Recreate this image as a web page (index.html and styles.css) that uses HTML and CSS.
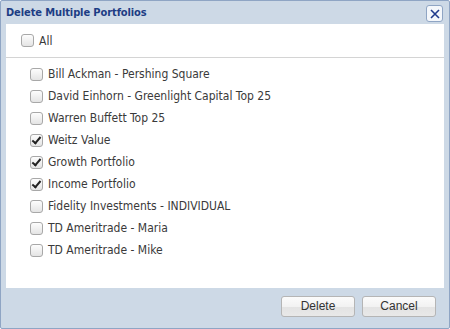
FILE: index.html
```html
<!DOCTYPE html>
<html>
<head>
<meta charset="utf-8">
<link rel="stylesheet" href="styles.css">
</head>
<body>
<div class="dialog">
  <div class="titlebar">
    <span class="title">Delete Multiple Portfolios</span>
    <button class="close" aria-label="Close">
      <svg width="10" height="10" viewBox="0 0 10 10"><path d="M1 1L9 9M9 1L1 9" stroke="#1f3a8c" stroke-width="1.6" fill="none"/></svg>
    </button>
  </div>
  <div class="content">
    <div class="allrow">
      <label class="item"><span class="cb"></span><span>All</span></label>
    </div>
    <ul class="list">
      <li class="item"><span class="cb"></span><span>Bill Ackman - Pershing Square</span></li>
      <li class="item"><span class="cb"></span><span>David Einhorn - Greenlight Capital Top 25</span></li>
      <li class="item"><span class="cb"></span><span>Warren Buffett Top 25</span></li>
      <li class="item"><span class="cb on"></span><span>Weitz Value</span></li>
      <li class="item"><span class="cb on"></span><span>Growth Portfolio</span></li>
      <li class="item"><span class="cb on"></span><span>Income Portfolio</span></li>
      <li class="item"><span class="cb"></span><span>Fidelity Investments - INDIVIDUAL</span></li>
      <li class="item"><span class="cb"></span><span>TD Ameritrade - Maria</span></li>
      <li class="item"><span class="cb"></span><span>TD Ameritrade - Mike</span></li>
    </ul>
  </div>
  <div class="footer">
    <button class="btn">Delete</button>
    <button class="btn">Cancel</button>
  </div>
</div>
</body>
</html>
```
FILE: styles.css
```css
html, body { margin: 0; padding: 0; background: #fff; }
body { font-family: "DejaVu Sans", Verdana, sans-serif; font-size: 11px; color: #333; }
.dialog {
  width: 448px; height: 327px;
  border: 1px solid #8fa5c4;
  border-radius: 2px;
  background: #cdd9e6;
  display: flex; flex-direction: column;
}
.titlebar {
  height: 23px;
  display: flex; align-items: center; justify-content: space-between;
  padding: 0 6px 0 5px;
}
.title { font-weight: bold; font-size: 11px; font-stretch: condensed; color: #1d3d84; letter-spacing: -0.1px; }
.close {
  width: 17px; height: 17px; padding: 0; margin-top: 2px;
  border: 1px solid #8fa5c4; border-radius: 3px;
  background: #f4f7fb;
  display: flex; align-items: center; justify-content: center;
}
.content {
  margin: 0 5px;
  background: #fff;
  height: 264px;
}
.allrow {
  height: 33px;
  border-bottom: 1px solid #d4d4d4;
  padding-left: 15px;
  display: flex; align-items: center;
}
.list { list-style: none; margin: 0; padding: 5px 0 0 24px; }
.list .item { height: 22px; }
.item { display: flex; align-items: center; gap: 5px; font-size: 12px; font-stretch: condensed; color: #3a3a3a; }
.cb {
  width: 11px; height: 11px;
  border: 1px solid #a8a8a8; border-radius: 3px;
  background: linear-gradient(#fdfdfd, #e4e4e4);
  position: relative; flex: none;
}
.cb.on::after {
  content: ""; position: absolute; left: 3px; top: 0px;
  width: 3px; height: 7px;
  border: solid #222; border-width: 0 2px 2px 0;
  transform: rotate(40deg);
}
.footer {
  flex: 1;
  display: flex; justify-content: flex-end; align-items: center; gap: 7px;
  padding: 0 13px 4px 0;
}
.btn {
  width: 74px; height: 21px;
  border: 1px solid #b5b5b5; border-radius: 3px;
  background: linear-gradient(#fbfbfb 0%, #f2f2f2 50%, #e3e3e3 51%, #e8e8e8 100%);
  font-family: "Liberation Sans", Arial, sans-serif; font-size: 12px; color: #333;
  padding: 0;
}
```
